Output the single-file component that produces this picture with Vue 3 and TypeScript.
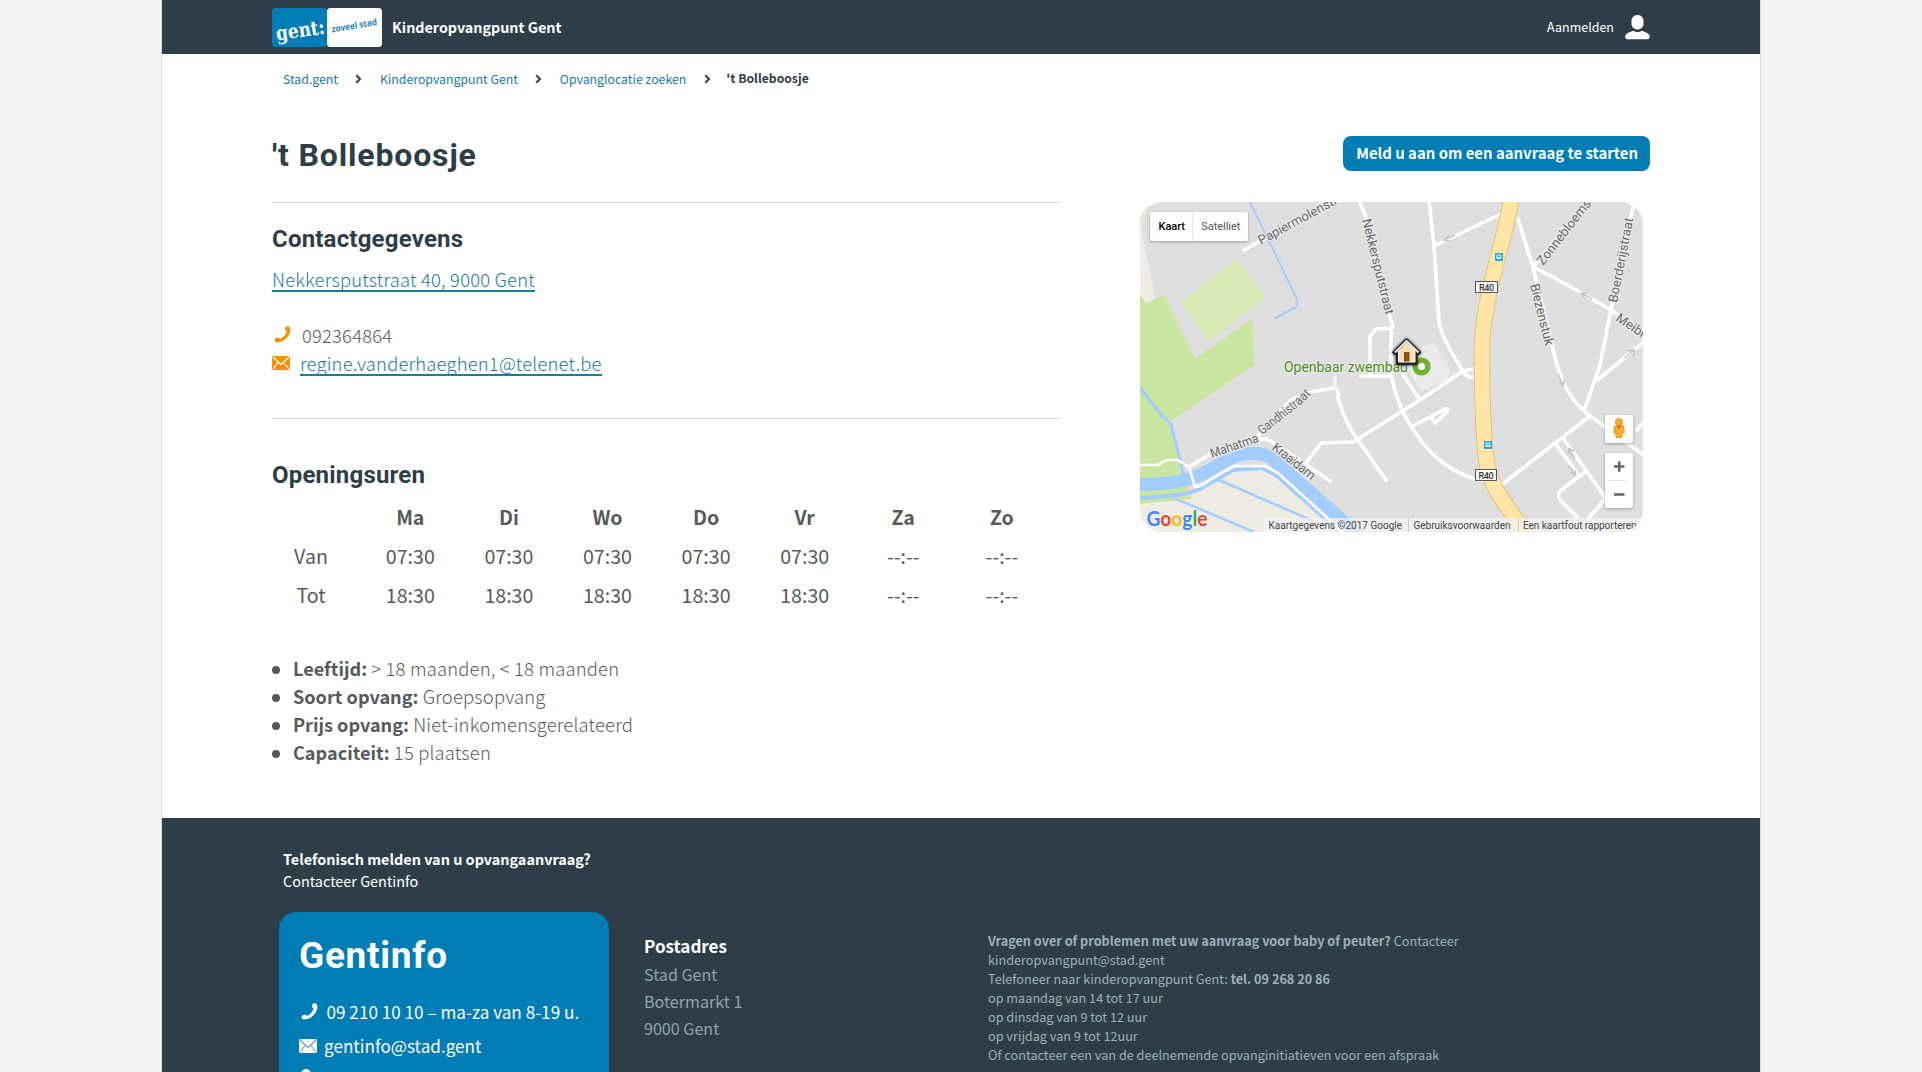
<script setup lang="ts">
interface Hours { day: string; from: string; to: string }
interface Fact { label: string; value: string }

const crumbs: string[] = ['Stad.gent', 'Kinderopvangpunt Gent', 'Opvanglocatie zoeken']
const hours: Hours[] = [
  { day: 'Ma', from: '07:30', to: '18:30' },
  { day: 'Di', from: '07:30', to: '18:30' },
  { day: 'Wo', from: '07:30', to: '18:30' },
  { day: 'Do', from: '07:30', to: '18:30' },
  { day: 'Vr', from: '07:30', to: '18:30' },
  { day: 'Za', from: '--:--', to: '--:--' },
  { day: 'Zo', from: '--:--', to: '--:--' },
]
const facts: Fact[] = [
  { label: 'Leeftijd:', value: '> 18 maanden, < 18 maanden' },
  { label: 'Soort opvang:', value: 'Groepsopvang' },
  { label: 'Prijs opvang:', value: 'Niet-inkomensgerelateerd' },
  { label: 'Capaciteit:', value: '15 plaatsen' },
]
const busStops: [number, number][] = [[1499, 257], [1488, 445]]
</script>

<template>
  <div class="page">
    <header class="topbar">
      <div class="brand">
        <svg class="logo" width="110" height="39" viewBox="0 0 110 39">
          <rect width="55" height="39" rx="3.5" fill="#007db5" />
          <rect x="55" width="55" height="39" rx="3.5" fill="#fff" />
          <text class="logo-gent" transform="translate(5 32.5) rotate(-8)" textLength="49" lengthAdjust="spacingAndGlyphs">gent:</text>
          <text class="logo-sub" transform="translate(60 24.5) rotate(-9.5)" textLength="46" lengthAdjust="spacingAndGlyphs">zoveel stad</text>
        </svg>
        <span class="brand-name">Kinderopvangpunt Gent</span>
      </div>
      <a class="login"><span>Aanmelden</span>
        <svg width="25" height="25" viewBox="0 0 25 25" fill="#fff">
          <rect x="6.5" y="0" width="12" height="14.5" rx="5.6" />
          <path d="M0.2 21C0.8 18.6 5 16.8 8 15.8Q12.500 18.500 17 15.800C20 16.800 24.200 18.600 24.600 21C24.800 23 24 24.300 22 24.300H3C1 24.300 0 23 .2 21Z" />
        </svg>
      </a>
    </header>

    <nav class="crumbs">
      <template v-for="c in crumbs" :key="c">
        <a class="crumb">{{ c }}</a>
        <svg class="chev" width="7" height="10" viewBox="0 0 7 10"><path d="M1.200 1.200L5 5L1.200 8.800" fill="none" stroke="#444" stroke-width="2.200" /></svg>
      </template>
      <strong class="crumb-here">'t Bolleboosje</strong>
    </nav>

    <main class="content">
      <div class="title-row">
        <h1>'t Bolleboosje</h1>
        <a class="button">Meld u aan om een aanvraag te starten</a>
      </div>
      <div class="columns">
        <div class="info">
          <section class="contact">
            <h2>Contactgegevens</h2>
            <a class="link address">Nekkersputstraat 40, 9000 Gent</a>
            <p class="row phone">
              <svg width="17" height="17" viewBox="0 0 17 17"><path d="M12.300 .6C14 -.4 16.300 1 16.400 3.200C16.500 9.800 10.500 16.200 3.500 16.400C1.500 16.400 .3 15 .6 13.600C.9 12.200 3.800 11.500 4.800 12C5.600 12.500 5.500 13.200 6.500 12.700C9 11.500 11.300 9.300 12.500 6.300C12.900 5.400 11.500 5.300 11.300 4.300C11 3 11.300 1.200 12.300 .6Z" fill="#f39108" /></svg>
              <span>092364864</span>
            </p>
            <p class="row mail">
              <svg width="18" height="14" viewBox="0 0 18 14"><rect width="18" height="14" rx="1.500" fill="#f39108" /><path d="M1 1L9 8.500L17 1M1 13L6.300 6.500M17 13L11.700 6.500" fill="none" stroke="#fff" stroke-width="1.100" /></svg>
              <a class="link">regine.vanderhaeghen1@telenet.be</a>
            </p>
          </section>
          <section class="opening">
            <h2>Openingsuren</h2>
            <table>
              <thead>
                <tr><th class="lead"></th><th v-for="h in hours" :key="h.day">{{ h.day }}</th></tr>
              </thead>
              <tbody>
                <tr><td class="lead">Van</td><td v-for="h in hours" :key="h.day">{{ h.from }}</td></tr>
                <tr><td class="lead">Tot</td><td v-for="h in hours" :key="h.day">{{ h.to }}</td></tr>
              </tbody>
            </table>
            <ul class="facts">
              <li v-for="f in facts" :key="f.label"><span><strong>{{ f.label }}</strong> {{ f.value }}</span></li>
            </ul>
          </section>
        </div>

        <svg class="map" width="503" height="330" viewBox="1140 202 503 330">
          <rect x="1140" y="202" width="503" height="330" fill="#dfdfdf" />
          <path d="M1140 202H1150L1141 226L1155 298L1146 304L1140 295Z" fill="#efece3" />
          <path d="M1140 202H1148L1140 224Z" fill="#c9e6a0" />
          <path d="M1140 294L1146 304L1164 295L1195 359L1253 318L1254 365L1171 421L1184 474L1192 499L1140 504Z" fill="#c9e6a0" />
          <path d="M1237 259L1265 297L1209 340L1181 302Z" fill="#d7eab4" stroke="#cfe6b0" stroke-width=".6" />
          <path d="M1140 504L1192 499L1190 491L1215 478L1235 465H1266L1352 532H1140Z" fill="#efece3" />
          <g fill="none" stroke="#a3ccff" stroke-linejoin="round">
            <path d="M1249 200L1297 299Q1299 304 1294 308L1274 319" stroke-width="2" />
            <path d="M1140 387L1162 416L1171 424L1184 476" stroke-width="3" />
            <path d="M1138 484.500C1170 484 1190 481 1208 471S1245 446 1270 457L1360 536" stroke-width="13" />
            <path d="M1140 498Q1186 496 1200 489L1233 470L1262 468L1276 475L1340 532" stroke-width="4" />
            <path d="M1217 479L1313 521M1174 498L1254 532" stroke-width="2.500" />
          </g>
          <g fill="none" stroke="#fff" stroke-width="3.600" stroke-linejoin="round" stroke-linecap="round">
            <path d="M1140 465H1157L1167 460H1177L1189 467L1195 487M1195 487Q1203 486 1211 479L1234 466L1265 466L1278 473L1345 534" stroke-width="2.600" />
            <path d="M1189 467L1212 453L1254 440L1266 439L1274 443L1330 481M1254 440L1290 401L1310 392L1334 388Q1340 391 1338 398Q1346 425 1358 440L1386 480" />
            <path d="M1307 462L1321 443L1353 442L1420 400L1463 371L1478 368M1463 372L1469 377L1478 377" />
            <path d="M1244 250L1345 195M1358 198L1365 215L1393 328" />
            <path d="M1360 376H1390M1370 376V336L1376 329L1391 328V368Q1391 385 1403 412Q1420 445 1443 463Q1465 479 1486 481" />
            <path d="M1403 375L1420 400M1411 427L1430 417L1445 409Q1449 408 1447 412L1435 423L1431 417" />
            <path d="M1429 200L1434 246L1439 322Q1440 335 1463 371M1434 246L1501 214" />
            <path d="M1514 218L1518 219L1533 267L1557 365Q1567 399 1590 416L1645 456M1533 267L1592 196M1533 267L1562 282L1611 310L1645 334" />
            <path d="M1635 198L1611 310L1600 365L1584 411M1645 341L1617 364L1597 380" />
            <path d="M1500 486L1590 416M1555 443L1577 473M1563 438L1605 497Q1605 501 1588 518M1585 472L1560 491Q1557 494 1560 500L1577 517M1637 430L1645 421" />
            <path d="M1335 377V388" stroke="#f3f3f3" />
          </g>
          <path d="M1417 350L1434 342L1450 370L1448 379L1421 391L1406 367Z" fill="#ebebeb" />
          <g fill="none" stroke-linejoin="round">
            <path d="M1512 196C1504 245 1482 300 1482 350C1482 400 1483 430 1486 458C1489 490 1513 512 1530 540" stroke="#e2c078" stroke-width="16.500" />
            <path d="M1512 196C1504 245 1482 300 1482 350C1482 400 1483 430 1486 458C1489 490 1513 512 1530 540" stroke="#ffe6a6" stroke-width="14.500" />
          </g>
          <g fill="none" stroke="#c3c6d2" stroke-width="1.600">
            <path d="M1455 235L1444 240M1449 235.500L1444 240L1451 241.500" />
            <path d="M1592 299L1581 293M1588 293L1580.500 293L1585 298.500" />
            <path d="M1625 358L1634 350M1628 351L1634.500 350L1633 356" />
            <path d="M1558 374L1563 385M1559 381.500L1563 385.500L1564.500 380" />
            <path d="M1575 459L1569 449M1568.500 454L1569 448.500L1574 451" />
            <path d="M1569 466L1575 475M1570 472.500L1575 475.500L1575.500 470" />
          </g>
          <g class="road-label">
            <text transform="translate(1261 245) rotate(-28.500)">Papiermolenstraat</text>
            <text transform="translate(1362 220) rotate(76)" textLength="98">Nekkersputstraat</text>
            <text transform="translate(1543 266) rotate(-52)">Zonnebloemstraat</text>
            <text transform="translate(1530 285) rotate(76)" textLength="63">Biezenstuk</text>
            <text transform="translate(1617 303) rotate(-79)" textLength="86">Boerderijstraat</text>
            <text transform="translate(1615 320) rotate(34)">Meibloemstraat</text>
            <text transform="translate(1212 458) rotate(-19)" textLength="50" lengthAdjust="spacingAndGlyphs">Mahatma</text>
            <text transform="translate(1262 435) rotate(-38)" textLength="47" lengthAdjust="spacingAndGlyphs">Gandhistr</text>
            <text transform="translate(1299 406) rotate(-44)" textLength="17" lengthAdjust="spacingAndGlyphs">aat</text>
            <text transform="translate(1271 449) rotate(38)" textLength="51">Kraaidam</text>
          </g>
          <g v-for="b in busStops" :key="b[1]">
            <rect :x="b[0] - 4" :y="b[1] - 4" width="8" height="8" fill="#2aa4dd" />
            <rect :x="b[0] - 2.5" :y="b[1] - 2.5" width="5" height="4.5" rx="1" fill="#e6f4fb" />
            <rect :x="b[0] - 1.5" :y="b[1] - 1.5" width="3" height="1.5" fill="#2aa4dd" />
          </g>
          <g class="shield">
            <rect x="1475.500" y="281.500" width="22" height="11" fill="#fff" stroke="#555" />
            <text x="1479" y="290.500" textLength="15">R40</text>
            <rect x="1475.500" y="469.500" width="21" height="11" fill="#fff" stroke="#555" />
            <text x="1478.500" y="478.500" textLength="15">R40</text>
          </g>
          <text class="poi" x="1284" y="372" textLength="124">Openbaar zwembad</text>
          <circle cx="1421.500" cy="366.500" r="6.300" fill="#fff" stroke="#6fb030" stroke-width="5.500" />
          <g stroke-linejoin="round">
            <path class="glow" d="M1406.500 340L1394 352.500L1397.500 354.500V363.500H1416V354.500L1419.500 352.500Z" fill="#222" stroke="#222" stroke-width="3" />
            <path d="M1398.500 351V362H1415V351L1406.500 343Z" fill="#f3dfb8" stroke="#fff" stroke-width="1" />
            <path d="M1395 352.500L1406.500 341L1418.500 352.500" fill="none" stroke="#f3e8cf" stroke-width="2" />
            <rect x="1404" y="352" width="5.500" height="9.500" fill="#8a4e16" />
          </g>
          <text class="google" y="525.500" textLength="61" lengthAdjust="spacingAndGlyphs" x="1146.500"><tspan fill="#4285f4">G</tspan><tspan fill="#ea4335">o</tspan><tspan fill="#fbbc05">o</tspan><tspan fill="#4285f4">g</tspan><tspan fill="#34a853">l</tspan><tspan fill="#ea4335">e</tspan></text>
          <rect x="1264" y="518" width="379" height="14" fill="#f5f5f5" opacity=".7" />
          <path d="M1408.500 518V532M1518.500 518V532" stroke="#ccc" />
          <g class="credit">
            <text x="1268.500" y="528.500" textLength="133.500">Kaartgegevens ©2017 Google</text>
            <text x="1413.500" y="528.500" textLength="97">Gebruiksvoorwaarden</text>
            <text x="1523" y="528.500" textLength="113.500">Een kaartfout rapporteren</text>
          </g>
          <g class="panel">
            <rect x="1150" y="212" width="98" height="29" rx="2" />
            <rect x="1605" y="415" width="28" height="28" rx="2" />
            <rect x="1605" y="453" width="28" height="55" rx="2" />
          </g>
          <path d="M1192.500 212V241M1609 480.500H1628" stroke="#e4e4e4" />
          <text class="type on" x="1158.500" y="230" textLength="26.500">Kaart</text>
          <text class="type" x="1201.300" y="230" textLength="39">Satelliet</text>
          <path d="M1614 466.500H1624.500M1619.200 461.300V471.700M1614 494.500H1624.500" stroke="#666" stroke-width="2.600" />
          <g fill="#f6ae2d" stroke="#c98312" stroke-width=".6">
            <path d="M1614.500 426Q1619 423.500 1623.500 426L1624.500 432.500L1622.500 433L1622 437.500H1616L1615.500 433L1613.500 432.500Z" />
            <circle cx="1619" cy="422" r="3.600" />
            <path d="M1616.500 426L1619 429L1621.500 426Z" fill="#e0711a" stroke="none" />
          </g>
        </svg>
      </div>
    </main>

    <footer class="footer">
      <p class="lead-in"><strong>Telefonisch melden van u opvangaanvraag?</strong><br />Contacteer Gentinfo</p>
      <div class="foot-cols">
        <div class="card">
          <h3>Gentinfo</h3>
          <p class="card-row call">
            <svg width="17" height="17" viewBox="0 0 17 17"><path d="M12.300 .6C14 -.4 16.300 1 16.400 3.200C16.500 9.800 10.500 16.200 3.500 16.400C1.500 16.400 .3 15 .6 13.600C.9 12.200 3.800 11.500 4.800 12C5.600 12.500 5.500 13.200 6.500 12.700C9 11.500 11.300 9.300 12.500 6.300C12.900 5.400 11.500 5.300 11.300 4.300C11 3 11.300 1.200 12.300 .6Z" fill="#fff" /></svg>
            <span>09 210 10 10 – ma-za van 8-19 u.</span>
          </p>
          <p class="card-row write">
            <svg width="18" height="14" viewBox="0 0 18 14"><rect width="18" height="14" rx="1.500" fill="#fff" /><path d="M1 1L9 8.500L17 1M1 13L6.300 6.500M17 13L11.700 6.500" fill="none" stroke="#6b98ac" stroke-width="1.100" /></svg>
            <span>gentinfo@stad.gent</span>
          </p>
          <svg class="pin" width="10" height="16" viewBox="0 0 10 16"><path d="M5 0A5 5 0 0 1 10 5C10 8 7 14 5 16C3 14 0 8 0 5A5 5 0 0 1 5 0Z" fill="#fff" /></svg>
        </div>
        <address class="post">
          <strong>Postadres</strong>
          <span>Stad Gent</span><span>Botermarkt 1</span><span>9000 Gent</span>
        </address>
        <p class="questions">
          <strong>Vragen over of problemen met uw aanvraag voor baby of peuter?</strong> Contacteer<br />kinderopvangpunt@stad.gent<br />
          Telefoneer naar kinderopvangpunt Gent: <strong>tel. 09 268 20 86</strong><br />op maandag van 14 tot 17 uur<br />op dinsdag van 9 tot 12 uur<br />op vrijdag van 9 tot 12uur<br />
          Of contacteer een van de deelnemende opvanginitiatieven voor een afspraak
        </p>
      </div>
    </footer>
  </div>
</template>

<style>
body { margin: 0; background: #f3f3f3; overflow: hidden; }
</style>

<style scoped>
.page {
  box-sizing: border-box; width: 1600px; height: 1072px; margin: 0 auto; overflow: hidden;
  display: flex; flex-direction: column; background: #fff;
  border: solid #dedede; border-width: 0 1px;
  font-family: "Noto Sans CJK SC", "Source Sans Pro", sans-serif; font-size: 18.100px; color: #565a5c;
}
h1, h2, h3, p, ul { margin: 0; padding: 0; font-weight: inherit; }
strong { font-weight: 700; }
.topbar { flex: none; height: 54px; padding: 0 110px; background: #2d3e48; color: #fff; display: flex; justify-content: space-between; align-items: center; }
.brand { display: flex; align-items: center; gap: 10px; }
.logo { display: block; }
.logo-gent { font: 700 20px "DejaVu Serif", serif; fill: #fff; }
.logo-sub { font: 700 9px "Noto Sans", sans-serif; fill: #1f86b8; }
.brand-name { font-weight: 700; font-size: 14.300px; line-height: 20px; }
.login { display: flex; align-items: center; gap: 11px; font-size: 12.500px; line-height: 20px; }
.crumbs { flex: none; height: 50px; padding-left: 121px; display: flex; align-items: center; font-size: 12.300px; line-height: 20px; color: #1b78a8; }
.chev { margin: 0 18px 0 17px; }
.chev:last-of-type { margin-left: 18px; }
.crumb-here { color: #2d3e48; margin: -2px 0 0 -3px; font-size: 12.200px; }
.content { flex: none; height: 714px; padding: 0 110px; box-sizing: border-box; }
.title-row { display: flex; justify-content: space-between; align-items: flex-start; height: 98px; box-sizing: border-box; }
h1 { font: 700 32px/40px Roboto, sans-serif; color: #2d3e48; margin-top: 31px; letter-spacing: .85px; }
.button { margin-top: 32px; height: 35px; box-sizing: border-box; padding: 0 12px 0 13px; border-radius: 8px; background: #007db5; color: #fff; font-weight: 700; font-size: 14.900px; line-height: 33px; }
.columns { display: flex; justify-content: space-between; padding-right: 7px; }
.info { width: 789px; }
.contact { height: 217px; box-sizing: border-box; border: solid #d6dbdd; border-width: 1px 0; padding-top: 20px; font-size: 18.400px; font-weight: 300; letter-spacing: .19px; }
h2 { font: 700 24px/32px Roboto, sans-serif; color: #2d3e48; letter-spacing: .2px; }
.link { color: #1b78a8; text-decoration: none; border-bottom: 2px solid #1b7c9c; line-height: 21px; display: inline-block; }
.address { margin-top: 14px; }
.row { display: flex; align-items: flex-start; height: 28px; line-height: 28px; }
.map { display: block; border-radius: 22px; }
.opening { padding-top: 40px; }
table { border-collapse: collapse; table-layout: fixed; margin-top: 6px; font-size: 19.600px; }
th, td { width: 98.600px; height: 39px; padding: 0; text-align: center; line-height: 24px; }
.lead { width: 78px; padding-right: 11px; }
.facts { list-style: none; margin-top: 40px; line-height: 28px; font-size: 18.400px; font-weight: 300; letter-spacing: .19px; }
.facts strong { font-size: 18.100px; letter-spacing: 0; }
.facts li { display: flex; align-items: center; height: 28px; }
.facts li::before { content: ""; width: 8px; height: 8px; border-radius: 50%; background: #565a5c; margin: 3px 13px 0 0; }
.phone { margin-top: 29px; }
.phone svg { margin: 5px 11px 0 2px; }
.mail svg { margin: 7px 10px 0 0; }
.mail .link { margin-top: 3.500px; }
.footer { flex: 1; background: #2d3e48; color: #fff; padding: 30px 117px 0; }
.lead-in { font-size: 14.430px; line-height: 22px; padding-left: 4px; }
.foot-cols { display: flex; margin-top: 20px; align-items: flex-start; }
.card { width: 330px; height: 200px; box-sizing: border-box; border-radius: 17px; background: #007db5; padding: 22px 20px; }
h3 { font: 700 37px/44px Roboto, sans-serif; letter-spacing: .7px; margin-bottom: 17px; }
.card-row { display: flex; height: 34px; line-height: 34px; font-size: 17.150px; }
.call svg { margin: 8px 8.500px 0 2px; }
.write svg { margin: 10px 7px 0 0; }
.pin { display: block; margin: 6px 0 0 2px; }
.post { display: flex; flex-direction: column; margin: 20px 0 0 35px; font-style: normal; line-height: 27px; color: #93a3ab; width: 344px; font-size: 16.100px; }
.post strong { color: #fff; font-size: 17.050px; margin-bottom: 1.500px; }
.questions { margin-top: 19px; font-size: 12.680px; line-height: 19px; color: #9fb0b8; }
.road-label text { font: 13px Roboto, sans-serif; fill: #6a6a6a; stroke: #e9e9e9; stroke-width: 2.500; paint-order: stroke; }
.shield text { font: 500 9px Roboto, sans-serif; fill: #333; }
.poi { font: 14px Roboto, sans-serif; fill: #4b8a1a; stroke: #eee; stroke-width: 2; paint-order: stroke; }
.glow { filter: drop-shadow(0 0 1.500px #000); }
.google { font: 700 21px Lato, sans-serif; stroke: #f2f2f2; stroke-width: 2; paint-order: stroke; }
.credit text { font: 10px Roboto, sans-serif; fill: #444; }
.panel rect { fill: #fff; filter: drop-shadow(0 1px 1.500px rgba(0, 0, 0, .3)); }
.type { font: 11px Roboto, sans-serif; fill: #565656; }
.type.on { font-weight: 500; fill: #000; }
</style>
